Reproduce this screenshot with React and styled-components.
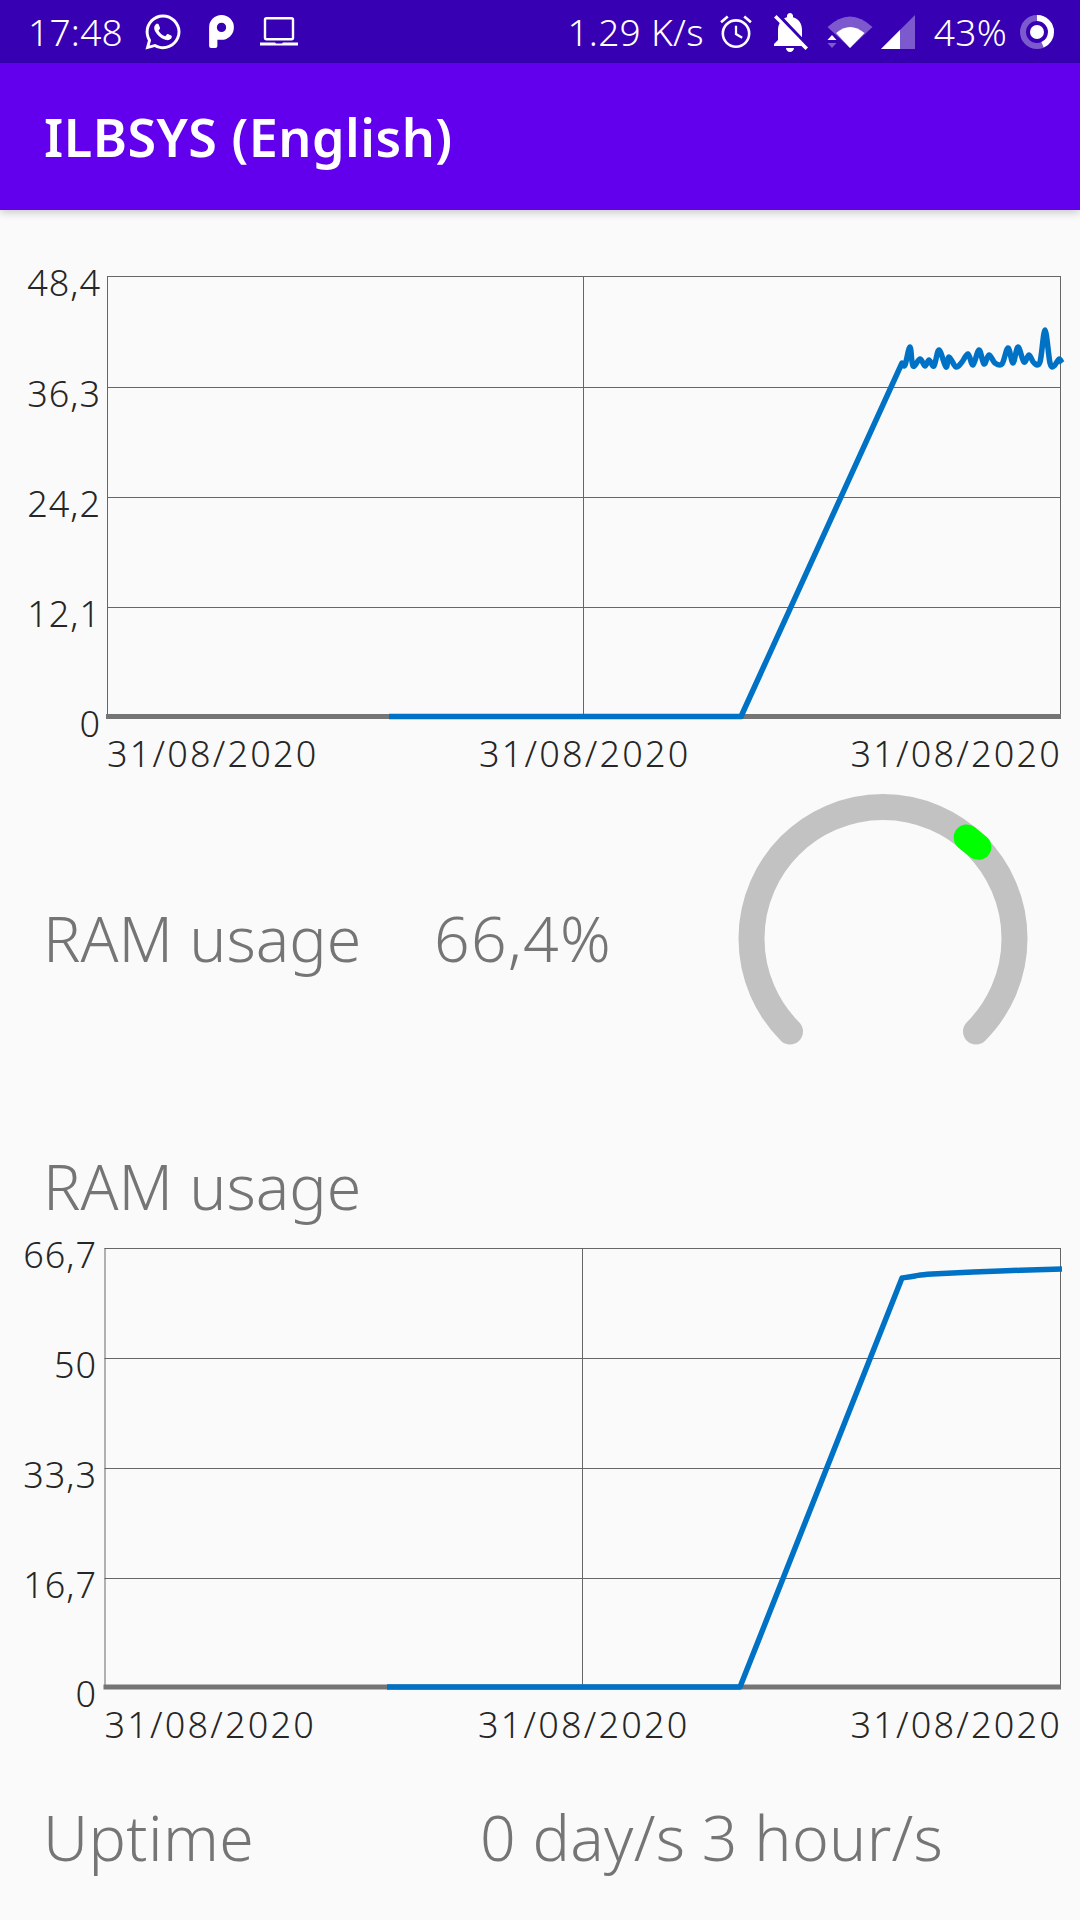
import React from "react";
import styled, { createGlobalStyle } from "styled-components";
import { FaWhatsapp } from "react-icons/fa";
import { MdNotificationsOff } from "react-icons/md";

const GRID = "#666666";
const BLUE = "#0072c6";

const cpuPoints = [
  [902, 363], [905, 365], [910, 347], [913, 366], [920, 359], [925, 366],
  [929, 360], [934, 366], [939, 350], [946, 367], [949, 357], [956, 367], [962, 362],
  [968, 354], [973, 365], [979, 350], [984, 364], [989, 355], [995, 363], [1002, 364],
  [1008, 348], [1013, 363], [1018, 347], [1024, 362], [1029, 355], [1034, 363], [1040, 362],
  [1045, 330], [1050, 363], [1054, 366], [1059, 359], [1062, 363],
];

const ramPoints = [
  [902, 1278], [915, 1276], [932, 1274], [1000, 1271], [1062, 1269],
];

// curve through every sample, so the peaks stay rounded like the chart library draws them
const curveThrough = (points) => {
  let d = "";
  for (let i = 0; i < points.length - 1; i++) {
    const p0 = points[i - 1] || points[i];
    const p1 = points[i];
    const p2 = points[i + 1];
    const p3 = points[i + 2] || p2;
    const c1 = [p1[0] + (p2[0] - p0[0]) / 6, p1[1] + (p2[1] - p0[1]) / 6];
    const c2 = [p2[0] - (p3[0] - p1[0]) / 6, p2[1] - (p3[1] - p1[1]) / 6];
    d += `C${c1[0]} ${c1[1]} ${c2[0]} ${c2[1]} ${p2[0]} ${p2[1]}`;
  }
  return d;
};

const App = () => {
  return (
    <Page>
      <GlobalStyle />
      <StatusBar>
        <StatusGroup>
          <StatusText>17:48</StatusText>
          <StatusIcon $left={20}>
            <FaWhatsapp size={40} />
          </StatusIcon>
          <StatusIcon $left={26}>
            <svg width="25" height="33" viewBox="0 0 24 32">
              <path
                fill="#fff"
                fillRule="evenodd"
                d="M0 12A12 12 0 0 1 24 12A12 12 0 0 1 12 24H8V30Q8 32 6 32H2Q0 32 0 30ZM12 7.5A4.5 4.5 0 1 0 12 16.5A4.5 4.5 0 1 0 12 7.5Z"
              />
            </svg>
          </StatusIcon>
          <StatusIcon $left={26}>
            <svg width="38" height="29" viewBox="0 0 38 29">
              <rect x="5" y="1.2" width="28" height="21" rx="1.5" fill="none" stroke="#fff" strokeWidth="2.4" />
              <path fill="#fff" d="M0 25.5H15L16 26.5H22L23 25.5H38V28.5H0Z" />
            </svg>
          </StatusIcon>
        </StatusGroup>
        <StatusGroup>
          <StatusText>1.29 K/s</StatusText>
          <StatusIcon $left={15}>
            <svg width="34" height="35" viewBox="0 0 32 34" fill="none" stroke="#fff">
              <circle cx="16" cy="19" r="12.8" strokeWidth="2.5" />
              <path d="M16 11.5V19.5L22 23" strokeWidth="2.2" />
              <path d="M1.5 8L8 2.5M30.5 8L24 2.5" strokeWidth="2.6" />
            </svg>
          </StatusIcon>
          <StatusIcon $left={13}>
            <MdNotificationsOff size={48} />
          </StatusIcon>
          <StatusIcon $left={13}>
            <svg width="47" height="36" viewBox="0 0 46 36">
              <path fill="#fff" opacity="0.35" d="M0 13Q22.5 -8 45 13L22.5 34Z" />
              <path fill="#fff" d="M8.6 19Q22.5 7 37 19L22.5 34Z" />
              <path fill="#fff" d="M0 26L4.5 21L9 26Z" />
              <path fill="#fff" opacity="0.35" d="M0 29L9 29L4.5 34Z" />
            </svg>
          </StatusIcon>
          <StatusIcon $left={7}>
            <svg width="34" height="36" viewBox="0 0 34 36">
              <path fill="#fff" opacity="0.35" d="M34 1V35H0Z" />
              <path fill="#fff" d="M0 35L19 16V35Z" />
            </svg>
          </StatusIcon>
          <StatusText $left={19}>43%</StatusText>
          <StatusIcon $left={13}>
            <svg width="34" height="34" viewBox="0 0 34 34">
              <circle cx="17" cy="17" r="14" fill="none" stroke="#fff" strokeOpacity="0.35" strokeWidth="6" />
              <circle
                cx="17"
                cy="17"
                r="14"
                fill="none"
                stroke="#fff"
                strokeWidth="6"
                strokeDasharray="38 88"
                transform="rotate(-90 17 17)"
              />
              <circle cx="17" cy="17" r="7" fill="#fff" />
            </svg>
          </StatusIcon>
        </StatusGroup>
      </StatusBar>

      <AppBar>
        <Title>ILBSYS (English)</Title>
      </AppBar>

      <Chart
        top={256}
        height={534}
        $marginTop={46}
        left={107}
        gridY={[276, 387, 497, 607, 716.5]}
        midX={583}
        labels={["48,4", "36,3", "24,2", "12,1", "0"]}
        labelRight={101}
        blueFrom={389}
        kneeX={741}
        points={cpuPoints}
        dateBase={767}
        dateMid={479}
      />

      <InfoRow $labelWidth={391} $height={300}>
        <Label>RAM usage</Label>
        <Label $spacing={1.2}>66,4%</Label>
        <Gauge />
      </InfoRow>

      <Heading>RAM usage</Heading>

      <Chart
        top={1226}
        height={544}
        left={104.5}
        gridY={[1248, 1358, 1468, 1578, 1687]}
        midX={582}
        labels={["66,7", "50", "33,3", "16,7", "0"]}
        labelRight={97}
        blueFrom={387}
        kneeX={740}
        points={ramPoints}
        dateBase={1738}
        dateMid={478}
      />

      <InfoRow $labelWidth={437} $height={138}>
        <Label $spacing={0.4}>Uptime</Label>
        <Label $spacing={0.3}>0 day/s 3 hour/s</Label>
      </InfoRow>
    </Page>
  );
};

const Chart = ({ top, height, $marginTop, left, gridY, midX, labels, labelRight, blueFrom, kneeX, points, dateBase, dateMid }) => {
  const right = 1060;
  const bottom = gridY[gridY.length - 1];
  const first = points[0];
  const line = `M${blueFrom} ${bottom}L${kneeX} ${bottom}L${first[0]} ${first[1]}${curveThrough(points)}`;

  return (
    <ChartSvg viewBox={`0 ${top} 1080 ${height}`} $height={height} $marginTop={$marginTop}>
      {gridY.slice(0, -1).map((y) => (
        <GridLine key={y} x1={left} x2={right} y1={y + 0.5} y2={y + 0.5} />
      ))}
      {[left, midX, right].map((x) => (
        <GridLine key={x} x1={x + 0.5} x2={x + 0.5} y1={gridY[0]} y2={bottom} />
      ))}
      <line x1={left - 1} x2={right + 1} y1={bottom} y2={bottom} stroke="#757575" strokeWidth="5" />
      <path d={line} fill="none" stroke={BLUE} strokeWidth="5.5" strokeLinejoin="round" />
      {labels.map((text, i) => (
        <AxisText key={text} x={labelRight} y={gridY[i] + 20} textAnchor="end" $spacing={1}>
          {text}
        </AxisText>
      ))}
      <AxisText x={left} y={dateBase} $spacing={2.2}>
        31/08/2020
      </AxisText>
      <AxisText x={dateMid} y={dateBase} $spacing={2.2}>
        31/08/2020
      </AxisText>
      <AxisText x={right + 2} y={dateBase} textAnchor="end" $spacing={2.2}>
        31/08/2020
      </AxisText>
    </ChartSvg>
  );
};

const Gauge = () => (
  <GaugeSvg width="300" height="300" viewBox="0 1.5 300 300">
    <path
      d="M57 243A131.5 131.5 0 1 1 243 243"
      fill="none"
      stroke="#c2c2c2"
      strokeWidth="26"
      strokeLinecap="round"
    />
    <path
      d="M233.7 49L245.3 58.3"
      fill="none"
      stroke="#00ff00"
      strokeWidth="26"
      strokeLinecap="round"
    />
  </GaugeSvg>
);

export default App;

const GlobalStyle = createGlobalStyle`
  html, body {
    margin: 0;
    padding: 0;
    background: #fafafa;
  }
  body {
    font-family: "Noto Sans", "Open Sans", sans-serif;
  }
`;

const Page = styled.div`
  width: 1080px;
  height: 1920px;
  overflow: hidden;
  display: flex;
  flex-direction: column;
`;

const StatusBar = styled.div`
  height: 63px;
  flex-shrink: 0;
  display: flex;
  align-items: center;
  justify-content: space-between;
  padding: 0 26px 0 28px;
  background: #3700b3;
  color: #fff;
`;

const StatusGroup = styled.div`
  display: flex;
  align-items: center;
`;

const StatusText = styled.span`
  margin-left: ${(props) => props.$left || 0}px;
  font-size: 37px;
  font-weight: 300;
  letter-spacing: 0.3px;
  line-height: 63px;
`;

const StatusIcon = styled.span`
  display: flex;
  margin-left: ${(props) => props.$left}px;
`;

const AppBar = styled.header`
  height: 147px;
  flex-shrink: 0;
  display: flex;
  align-items: center;
  padding-left: 44px;
  background: #6200ee;
  box-shadow: 0 3px 8px rgba(0, 0, 0, 0.18);
`;

const Title = styled.h1`
  margin: 0;
  color: #fff;
  font-size: 52px;
  font-weight: 600;
  letter-spacing: 0.5px;
`;

const ChartSvg = styled.svg`
  display: block;
  flex-shrink: 0;
  width: 1080px;
  height: ${(props) => props.$height}px;
  margin-top: ${(props) => props.$marginTop || 0}px;
`;

const GridLine = styled.line`
  stroke: ${GRID};
  stroke-width: 1;
`;

const AxisText = styled.text`
  fill: #262626;
  font-size: 36px;
  font-weight: 300;
  letter-spacing: ${(props) => props.$spacing}px;
`;

const InfoRow = styled.div`
  height: ${(props) => props.$height}px;
  flex-shrink: 0;
  display: grid;
  grid-template-columns: ${(props) => props.$labelWidth}px 1fr auto;
  align-items: center;
  padding: 0 47px 0 43px;
`;

const Label = styled.span`
  color: #757575;
  font-size: 62.5px;
  font-weight: 350;
  line-height: 86px;
  letter-spacing: ${(props) => props.$spacing || 0}px;
  padding-bottom: 4px;
  white-space: nowrap;
`;

const Heading = styled(Label)`
  display: block;
  flex-shrink: 0;
  line-height: 80px;
  padding: 56px 0 0 43px;
`;

const GaugeSvg = styled.svg`
  display: block;
`;
